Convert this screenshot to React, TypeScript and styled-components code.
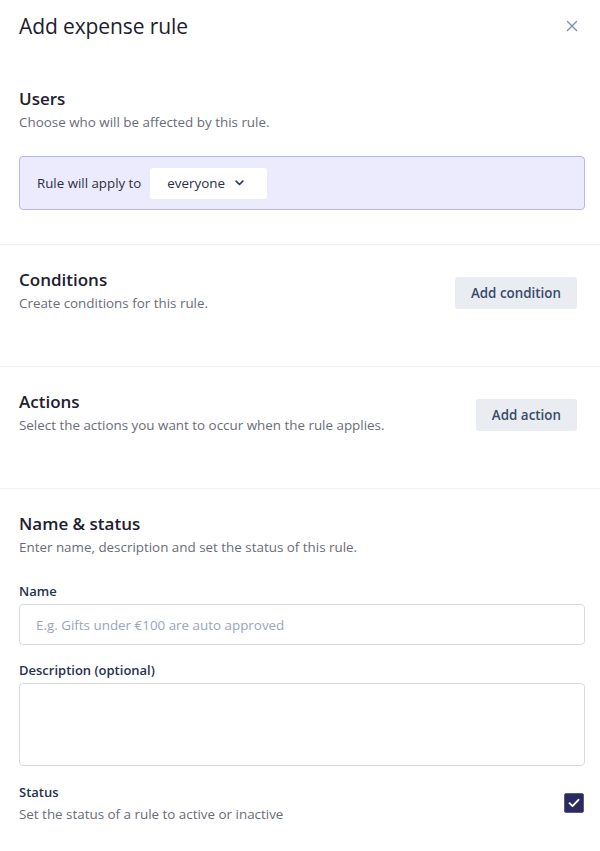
import styled, { createGlobalStyle } from 'styled-components';

const GlobalStyle = createGlobalStyle`
    html, body {
        margin: 0;
        padding: 0;
        background: #ffffff;
    }
    body {
        font-family: "Open Sans", Lato, Arial, sans-serif;
        color: #1f2230;
        -webkit-font-smoothing: antialiased;
    }
    * {
        box-sizing: border-box;
    }
`;

const CloseIcon = () => (
    <svg width="12" height="12" viewBox="0 0 12 12" fill="none">
        <path d="M1.5 1.5l9 9M10.5 1.5l-9 9" stroke="#7d8db3" strokeWidth="1.4" strokeLinecap="round" />
    </svg>
);

const ChevronIcon = () => (
    <svg width="9" height="6" viewBox="0 0 9 6" fill="none">
        <path d="M1.2 1.2l3.3 3.3 3.3-3.3" stroke="#2f3a5c" strokeWidth="1.7" strokeLinecap="round" strokeLinejoin="round" />
    </svg>
);

const CheckIcon = () => (
    <svg width="12" height="10" viewBox="0 0 12 10" fill="none">
        <path d="M1.5 5.2l3 3L10.5 1.8" stroke="#ffffff" strokeWidth="1.9" strokeLinecap="round" strokeLinejoin="round" />
    </svg>
);

const App = () => {
    return (
        <Page>
            <GlobalStyle />
            <TopBar>
                <Title>Add expense rule</Title>
                <CloseButton aria-label="Close">
                    <CloseIcon />
                </CloseButton>
            </TopBar>

            <Section $pt={26} $pb={34}>
                <SectionHead>
                    <Heading>Users</Heading>
                    <SubText>Choose who will be affected by this rule.</SubText>
                </SectionHead>
                <ApplyBox>
                    <ApplyLabel>Rule will apply to</ApplyLabel>
                    <SelectBox>
                        everyone
                        <ChevronIcon />
                    </SelectBox>
                </ApplyBox>
            </Section>

            <Section $pt={25} $pb={54} $divider>
                <Row>
                    <SectionHead>
                        <Heading>Conditions</Heading>
                        <SubText>Create conditions for this rule.</SubText>
                    </SectionHead>
                    <GreyButton>Add condition</GreyButton>
                </Row>
            </Section>

            <Section $pt={25} $pb={54} $divider>
                <Row>
                    <SectionHead>
                        <Heading>Actions</Heading>
                        <SubText>Select the actions you want to occur when the rule applies.</SubText>
                    </SectionHead>
                    <GreyButton>Add action</GreyButton>
                </Row>
            </Section>

            <Section $pt={25} $pb={30} $divider>
                <SectionHead>
                    <Heading>Name &amp; status</Heading>
                    <SubText>Enter name, description and set the status of this rule.</SubText>
                </SectionHead>

                <Field $mt={26}>
                    <Label>Name</Label>
                    <TextInput placeholder="E.g. Gifts under €100 are auto approved" />
                </Field>

                <Field $mt={16}>
                    <Label>Description (optional)</Label>
                    <TextArea />
                </Field>

                <StatusRow>
                    <div>
                        <Label>Status</Label>
                        <SubText>Set the status of a rule to active or inactive</SubText>
                    </div>
                    <Checkbox role="checkbox" aria-checked="true">
                        <CheckIcon />
                    </Checkbox>
                </StatusRow>
            </Section>
        </Page>
    );
};

const Page = styled.div`
    width: 600px;
    min-height: 851px;
    background: #ffffff;
`;

const TopBar = styled.div`
    display: flex;
    align-items: center;
    justify-content: space-between;
    padding: 14px 22px 25px 19px;
`;

const Title = styled.h1`
    margin: 0;
    font-size: 21px;
    line-height: 24px;
    font-weight: 400;
    letter-spacing: -0.1px;
    color: #1d2030;
`;

const CloseButton = styled.button`
    border: 0;
    background: none;
    padding: 0;
    display: flex;
    cursor: pointer;
`;

const Section = styled.section<{ $pt: number; $pb: number; $divider?: boolean }>`
    padding: ${(p) => p.$pt}px 15px ${(p) => p.$pb}px 19px;
    border-top: ${(p) => (p.$divider ? '1px solid #f0f1f4' : 'none')};
`;

const Row = styled.div`
    display: flex;
    align-items: center;
    justify-content: space-between;
    padding-right: 8px;
`;

const SectionHead = styled.div`
    display: flex;
    flex-direction: column;
    gap: 4px;
`;

const Heading = styled.h2`
    margin: 0;
    font-size: 17px;
    line-height: 20px;
    font-weight: 600;
    color: #1d2030;
`;

const SubText = styled.p`
    margin: 0;
    font-size: 13.4px;
    line-height: 18px;
    color: #6a6d78;
`;

const ApplyBox = styled.div`
    margin-top: 25px;
    height: 54px;
    display: flex;
    align-items: center;
    gap: 9px;
    padding: 0 17px;
    background: #ecebfd;
    border: 1px solid #b9b6ee;
    border-radius: 4px;
`;

const ApplyLabel = styled.span`
    font-size: 13.3px;
    color: #2b2f45;
`;

const SelectBox = styled.div`
    height: 31px;
    width: 117px;
    display: flex;
    align-items: center;
    gap: 10px;
    padding: 0 17px;
    background: #ffffff;
    border-radius: 3px;
    font-size: 13.4px;
    color: #2b2f45;
`;

const GreyButton = styled.button`
    height: 32px;
    margin-top: 4px;
    padding: 0 16px;
    border: 0;
    border-radius: 3px;
    background: #e9edf2;
    font-family: inherit;
    font-size: 13.4px;
    font-weight: 600;
    color: #3b4a6b;
    cursor: pointer;
`;

const Field = styled.div<{ $mt: number }>`
    margin-top: ${(p) => p.$mt}px;
    display: flex;
    flex-direction: column;
    gap: 4px;
`;

const Label = styled.div`
    font-size: 13px;
    line-height: 18px;
    font-weight: 600;
    color: #27314f;
`;

const TextInput = styled.input`
    height: 41px;
    width: 100%;
    padding: 0 16px;
    border: 1px solid #d5dae6;
    border-radius: 4px;
    font-family: inherit;
    font-size: 13.4px;
    color: #27314f;
    outline: none;

    &::placeholder {
        color: #9aa5bf;
    }
`;

const TextArea = styled.textarea`
    height: 83px;
    width: 100%;
    padding: 10px 16px;
    border: 1px solid #d5dae6;
    border-radius: 4px;
    font-family: inherit;
    font-size: 13px;
    resize: none;
    outline: none;
    display: block;
`;

const StatusRow = styled.div`
    margin-top: 17px;
    display: flex;
    align-items: center;
    justify-content: space-between;
    gap: 4px;

    & > div {
        display: flex;
        flex-direction: column;
        gap: 4px;
    }
`;

const Checkbox = styled.div`
    width: 20px;
    height: 20px;
    margin-right: 1px;
    border-radius: 2px;
    background: #2a2a5e;
    border: 1px solid #5a5a8a;
    display: flex;
    align-items: center;
    justify-content: center;
`;

export default App;
